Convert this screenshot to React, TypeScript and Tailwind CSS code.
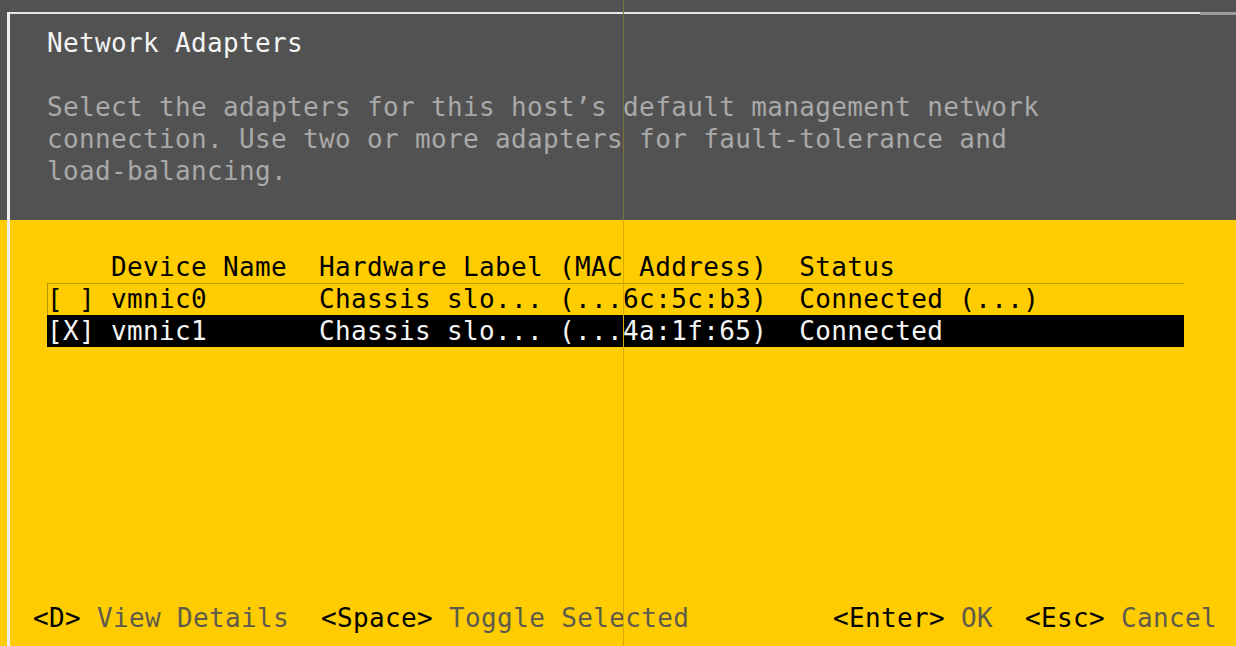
const GRAY = "bg-[#525252]";

const rows = [
  { mark: "[ ]", name: "vmnic0", label: "Chassis slo...", mac: "(...6c:5c:b3)", status: "Connected (...)", selected: false },
  { mark: "[X]", name: "vmnic1", label: "Chassis slo...", mac: "(...4a:1f:65)", status: "Connected", selected: true },
];

const pad = (s: string, n: number) => s + " ".repeat(Math.max(0, n - s.length));

const App = () => {
  return (
    <div
      className="relative w-[1236px] h-[646px] overflow-hidden flex text-[26px] leading-[32px] tracking-[0.35px] whitespace-pre"
      style={{ fontFamily: '"DejaVu Sans Mono", "Liberation Mono", monospace' }}
    >
      {/* left margin strip */}
      <div className="w-[7px] flex flex-col">
        <div className={`h-[220px] ${GRAY}`} />
        <div className="flex-1 bg-[#ffcc00]" />
      </div>

      {/* left frame line */}
      <div className="w-[3px] flex flex-col">
        <div className={`h-[12px] ${GRAY}`} />
        <div className="flex-1 bg-[#eeeeee]" />
      </div>

      <div className="flex-1 flex flex-col">
        {/* Header panel */}
        <div className={`h-[220px] ${GRAY} pt-[12px]`}>
          <div className="flex items-start">
            <div className="flex-1 h-[2px] bg-[#e6e6e6]" />
            <div className="w-[36px] h-[3px] bg-[#9c9c9c]" />
          </div>
          <div className="pl-[37px] pt-[12px] text-[#f4f4f4]">Network Adapters</div>
          <div className="pl-[37px] mt-[32px] text-[#a9a9a9]">
            <div>Select the adapters for this host’s default management network</div>
            <div>connection. Use two or more adapters for fault-tolerance and</div>
            <div>load-balancing.</div>
          </div>
        </div>

        {/* Yellow body */}
        <div className="flex-1 bg-[#ffcc00] flex flex-col pt-[31px] pb-[12px]">
          <div className="pl-[37px] w-[1174px]">
            <div className="h-[32px] text-black">
              {"    " + pad("Device Name", 13) + pad("Hardware Label (MAC Address)", 30) + "Status"}
            </div>
            {rows.map((r) => (
              <div
                key={r.name}
                className={
                  r.selected
                    ? "h-[32px] bg-black text-[#f4f4f4]"
                    : "h-[32px] text-black shadow-[inset_1px_1px_0_#b89600]"
                }
              >
                {pad(r.mark, 4) + pad(r.name, 13) + pad(r.label, 15) + pad(r.mac, 15) + r.status}
              </div>
            ))}
          </div>

          <div className="mt-auto flex justify-between pl-[23px] pr-[19px]">
            <div>
              <span className="text-black">{"<D>"}</span>
              <span className="text-[#5e5b4c]"> View Details  </span>
              <span className="text-black">{"<Space>"}</span>
              <span className="text-[#5e5b4c]"> Toggle Selected</span>
            </div>
            <div>
              <span className="text-black">{"<Enter>"}</span>
              <span className="text-[#5e5b4c]"> OK  </span>
              <span className="text-black">{"<Esc>"}</span>
              <span className="text-[#5e5b4c]"> Cancel</span>
            </div>
          </div>
        </div>
      </div>

      {/* compositing seam over the screen */}
      <div className="absolute left-[623px] top-0 w-px h-[220px] bg-[#7a7440]" />
      <div className="absolute left-[623px] top-[220px] w-px h-[426px] bg-[#d6ab00]" />
    </div>
  );
};

export default App;
